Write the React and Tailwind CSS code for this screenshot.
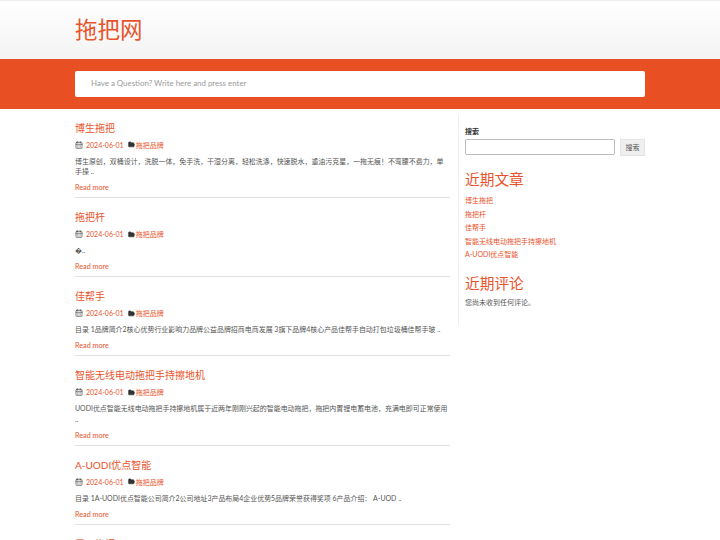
import { CalendarDays, FolderOpen } from "lucide-react";

const posts = [
  {
    title: "博生拖把",
    excerpt: "博生原创，双桶设计，洗脱一体，免手洗，干湿分离，轻松洗涤，快速脱水，重油污克星，一拖无痕！不弯腰不费力，单手操 ..",
  },
  { title: "拖把杆", excerpt: "�.." },
  {
    title: "佳帮手",
    excerpt: "目录 1品牌简介2核心优势行业影响力品牌公益品牌招商电商发展 3旗下品牌4核心产品佳帮手自动打包垃圾桶佳帮手玻 ..",
  },
  {
    title: "智能无线电动拖把手持擦地机",
    excerpt: "UODI优点智能无线电动拖把手持擦地机属于近两年刚刚兴起的智能电动拖把，拖把内置锂电蓄电池，充满电即可正常使用 ..",
  },
  {
    title: "A-UODI优点智能",
    excerpt: "目录 1A-UODI优点智能公司简介2公司地址3产品布局4企业优势5品牌荣誉获得奖项 6产品介绍： A-UOD ..",
  },
];

const recent = ["博生拖把", "拖把杆", "佳帮手", "智能无线电动拖把手持擦地机", "A-UODI优点智能"];

function Post({ post }) {
  return (
    <article className="border-b border-[#e1e1e1] pb-[4.25px] mb-[12px]">
      <h3 className="text-[10px] leading-[14px] text-[#e9532b]">{post.title}</h3>
      <div className="flex items-center mt-[5px] h-[10px] text-[7px] text-[#e9532b]">
        <CalendarDays size={8} className="text-[#444] mr-[3px]" />
        <span className="mr-[4px]">2024-06-01</span>
        <FolderOpen size={7} fill="#333" className="text-[#333] mr-[1px]" />
        <span>拖把品牌</span>
      </div>
      <p className="text-[6.96px] leading-[10.5px] text-[#555] mt-[5.75px]">{post.excerpt}</p>
      <a className="block text-[7.2px] leading-[10px] text-[#e9532b] mt-[6.5px]">Read more</a>
    </article>
  );
}

export default function App() {
  return (
    <div className="h-[540px] overflow-hidden bg-white font-['Lato','Noto_Sans_CJK_SC',sans-serif]">
      {/* Header */}
      <header className="h-[59px] border-t border-[#eeeeee] bg-gradient-to-b from-white to-[#f3f3f3] pl-[75px] flex items-center">
        <h1 className="text-[22.5px] text-[#e9532b] leading-none">拖把网</h1>
      </header>

      {/* Search band */}
      <div className="h-[50px] bg-[#e85024] pl-[75px] pt-[12px]">
        <div className="w-[570px] h-[26px] bg-white rounded-[2px] pl-[16px] flex items-center text-[7.9px] text-[#999]">
          Have a Question? Write here and press enter
        </div>
      </div>

      <div className="flex pl-[75px]">
        {/* Posts */}
        <main className="w-[375px] pt-[11.75px]">
          {posts.map((post) => (
            <Post key={post.title} post={post} />
          ))}
          <h3 className="text-[10px] leading-[14px] text-[#e9532b]">霸王拖把</h3>
        </main>

        {/* Sidebar */}
        <aside className="ml-[8px] mt-[6px] w-[195px] h-[210px] border-l border-[#eeeeee] pl-[6px] pt-[11px]">
          <div className="text-[7px] leading-[10px] font-bold text-[#333]">搜索</div>
          <div className="flex items-start mt-[3px]">
            <div className="w-[150px] h-[16px] border border-[#bbb] rounded-[2px] bg-white" />
            <div className="ml-[5px] w-[25px] h-[17px] bg-[#efefef] border border-[#e5e5e5] flex items-center justify-center text-[7px] text-[#555]">
              搜索
            </div>
          </div>
          <h2 className="text-[14.7px] leading-[20px] text-[#e9532b] mt-[13px]">近期文章</h2>
          <ul className="mt-[5.4px]">
            {recent.map((item) => (
              <li key={item} className="text-[7px] leading-[13.5px] text-[#e9532b]">
                {item}
              </li>
            ))}
          </ul>
          <h2 className="text-[14.7px] leading-[20px] text-[#e9532b] mt-[11.1px]">近期评论</h2>
          <p className="text-[7px] leading-[10px] text-[#555] mt-[4.5px]">您尚未收到任何评论。</p>
        </aside>
      </div>
    </div>
  );
}
